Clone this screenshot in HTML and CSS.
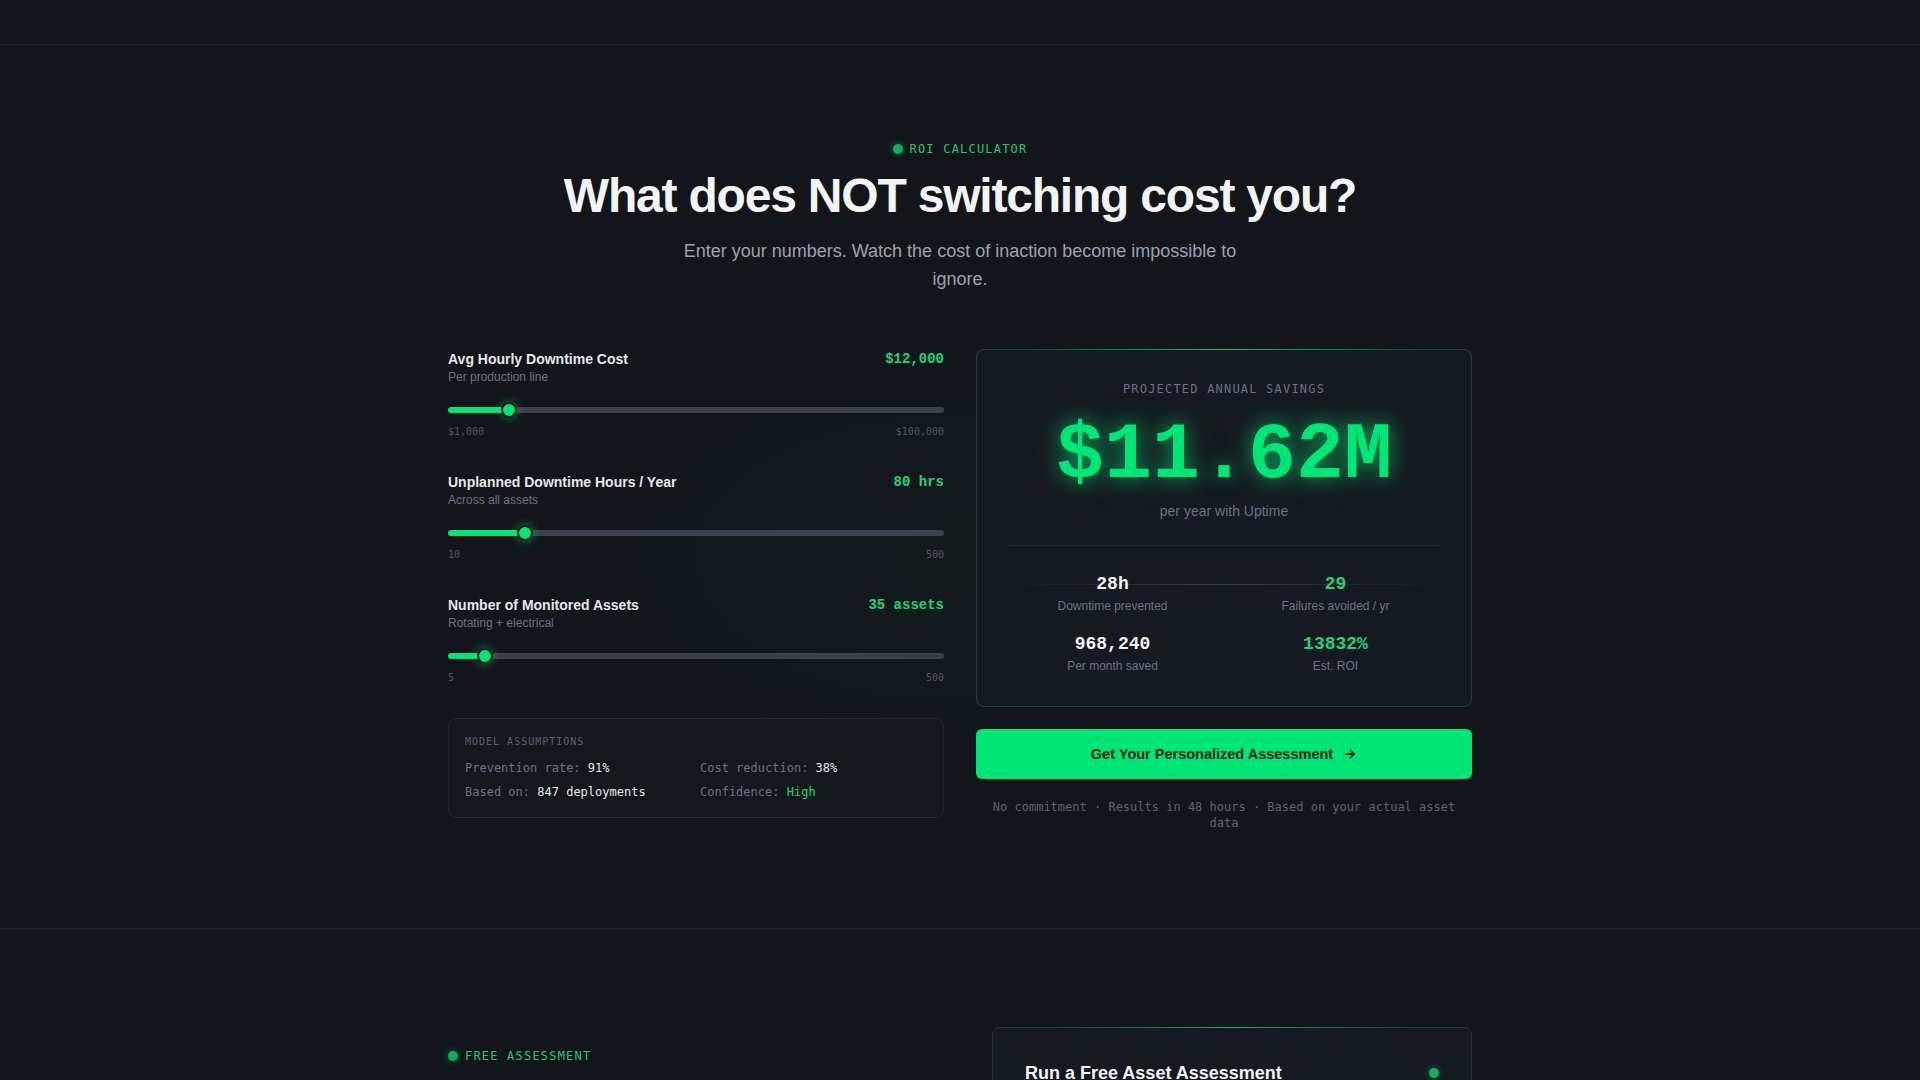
FILE: index.html
```html
<!DOCTYPE html>
<html lang="en">
<head>
<meta charset="utf-8">
<title>ROI Calculator</title>
<link rel="stylesheet" href="styles.css">
</head>
<body>
<header class="topbar"></header>

<section class="roi">
  <div class="roi-inner">
    <div class="eyebrow center"><span class="dot"></span>ROI CALCULATOR</div>
    <h2 class="title">What does NOT switching cost you?</h2>
    <p class="subtitle">Enter your numbers. Watch the cost of inaction become impossible to ignore.</p>

    <div class="calc-grid">
      <div class="inputs">
        <div class="slider-block">
          <div class="slider-head">
            <div>
              <div class="slider-label">Avg Hourly Downtime Cost</div>
              <div class="slider-sub">Per production line</div>
            </div>
            <div class="slider-value">$12,000</div>
          </div>
          <input class="range" type="range" min="1000" max="100000" value="12000" style="--p:11.11%">
          <div class="scale"><span>$1,000</span><span>$100,000</span></div>
        </div>

        <div class="slider-block">
          <div class="slider-head">
            <div>
              <div class="slider-label">Unplanned Downtime Hours / Year</div>
              <div class="slider-sub">Across all assets</div>
            </div>
            <div class="slider-value">80 hrs</div>
          </div>
          <input class="range" type="range" min="10" max="500" value="80" style="--p:14.29%">
          <div class="scale"><span>10</span><span>500</span></div>
        </div>

        <div class="slider-block">
          <div class="slider-head">
            <div>
              <div class="slider-label">Number of Monitored Assets</div>
              <div class="slider-sub">Rotating + electrical</div>
            </div>
            <div class="slider-value">35 assets</div>
          </div>
          <input class="range" type="range" min="5" max="500" value="35" style="--p:6.06%">
          <div class="scale"><span>5</span><span>500</span></div>
        </div>

        <div class="assumptions">
          <div class="assume-title">MODEL ASSUMPTIONS</div>
          <div class="assume-grid">
            <div><span class="k">Prevention rate:</span> <span class="v">91%</span></div>
            <div><span class="k">Cost reduction:</span> <span class="v">38%</span></div>
            <div><span class="k">Based on:</span> <span class="v">847 deployments</span></div>
            <div><span class="k">Confidence:</span> <span class="v green">High</span></div>
          </div>
        </div>
      </div>

      <div class="results">
        <div class="savings-card">
          <div class="savings-label">PROJECTED ANNUAL SAVINGS</div>
          <div class="savings-value">$11.62M</div>
          <div class="savings-sub">per year with Uptime</div>
          <div class="divider"></div>
          <div class="stats">
            <div class="scanline"></div>
            <div class="stat">
              <div class="stat-value">28h</div>
              <div class="stat-label">Downtime prevented</div>
            </div>
            <div class="stat">
              <div class="stat-value green">29</div>
              <div class="stat-label">Failures avoided / yr</div>
            </div>
            <div class="stat">
              <div class="stat-value">968,240</div>
              <div class="stat-label">Per month saved</div>
            </div>
            <div class="stat">
              <div class="stat-value green">13832%</div>
              <div class="stat-label">Est. ROI</div>
            </div>
          </div>
        </div>
        <button class="cta">Get Your Personalized Assessment
          <svg class="arrow" width="14" height="14" viewBox="0 0 24 24" fill="none" stroke="currentColor" stroke-width="3" stroke-linecap="round" stroke-linejoin="round"><path d="M5 12h14"/><path d="M13 6l6 6-6 6"/></svg>
        </button>
        <p class="footnote">No commitment · Results in 48 hours · Based on your actual asset data</p>
      </div>
    </div>
  </div>
</section>

<section class="assess">
  <div class="assess-inner">
    <div class="assess-left">
      <div class="eyebrow"><span class="dot"></span>FREE ASSESSMENT</div>
    </div>
    <div class="assess-card">
      <div class="assess-card-head">
        <h3>Run a Free Asset Assessment</h3>
        <span class="live-dot"></span>
      </div>
    </div>
  </div>
</section>
</body>
</html>
```

FILE: styles.css
```css
* { box-sizing: border-box; }

html, body {
  margin: 0;
  padding: 0;
  background: #12151a;
  color: #e5e7eb;
  font-family: "Liberation Sans", Arial, sans-serif;
}

.topbar {
  height: 45px;
  border-bottom: 1px solid #1d2128;
  background: #12151a;
}

.roi {
  position: relative;
  padding: 96px 0 97px;
  border-bottom: 1px solid #1d2128;
  background:
    radial-gradient(ellipse 700px 380px at 50% 58%, rgba(0, 230, 118, 0.025), rgba(0, 0, 0, 0) 70%),
    #12151a;
}

.roi-inner {
  max-width: 1024px;
  margin: 0 auto;
}

.eyebrow {
  display: flex;
  align-items: center;
  gap: 7px;
  font-family: "DejaVu Sans Mono", monospace;
  font-size: 12px;
  line-height: 16px;
  letter-spacing: 0.1em;
  color: #22c878;
}
.eyebrow.center { justify-content: center; }

.dot {
  width: 10px;
  height: 10px;
  border-radius: 50%;
  background: #0fae5c;
  box-shadow: 0 0 6px rgba(0, 230, 118, 0.5);
}

.title {
  margin: 13px 0 0;
  text-align: center;
  font-size: 48px;
  line-height: 1.1;
  font-weight: 700;
  letter-spacing: -0.025em;
  color: #f3f4f6;
}

.subtitle {
  margin: 14px auto 0;
  max-width: 570px;
  text-align: center;
  font-size: 18px;
  line-height: 28px;
  color: #9ca3af;
}

.calc-grid {
  margin-top: 56px;
  display: grid;
  grid-template-columns: 1fr 1fr;
  gap: 32px;
  align-items: start;
}

/* sliders */
.slider-block { margin-bottom: 33px; }
.slider-block:last-of-type { margin-bottom: 0; }

.slider-head {
  display: flex;
  justify-content: space-between;
  align-items: flex-start;
}

.slider-label {
  font-size: 14px;
  line-height: 20px;
  font-weight: 700;
  color: #e5e7eb;
}

.slider-sub {
  font-size: 12px;
  line-height: 16px;
  color: #6b7280;
}

.slider-value {
  font-family: "Liberation Mono", monospace;
  font-size: 14px;
  line-height: 20px;
  font-weight: 700;
  color: #1fd47a;
}

.range {
  -webkit-appearance: none;
  appearance: none;
  display: block;
  width: 100%;
  height: 16px;
  margin: 17px 0 0;
  padding: 0;
  background: transparent;
  outline: none;
}
.range::-webkit-slider-runnable-track {
  height: 6px;
  border-radius: 3px;
  background: linear-gradient(to right, #00e676 0, #00e676 var(--p), #3a404c var(--p), #3a404c 100%);
}
.range::-webkit-slider-thumb {
  -webkit-appearance: none;
  appearance: none;
  width: 16px;
  height: 16px;
  margin-top: -5px;
  border-radius: 50%;
  background: #00e676;
  border: 2px solid #0f1a14;
  box-shadow: 0 0 8px rgba(0, 230, 118, 0.55);
}
.range::-moz-range-track {
  height: 6px;
  border-radius: 3px;
  background: linear-gradient(to right, #00e676 0, #00e676 var(--p), #3a404c var(--p), #3a404c 100%);
}
.range::-moz-range-thumb {
  width: 14px;
  height: 14px;
  border-radius: 50%;
  background: #00e676;
  border: 2px solid #0f1a14;
  box-shadow: 0 0 8px rgba(0, 230, 118, 0.55);
}

.scale {
  display: flex;
  justify-content: space-between;
  margin-top: 7px;
  font-family: "DejaVu Sans Mono", monospace;
  font-size: 10px;
  line-height: 14px;
  color: #4f5663;
}

/* assumptions */
.assumptions {
  margin-top: 33px;
  padding: 16px;
  border: 1px solid #23272f;
  border-radius: 8px;
  background: #14171c;
}

.assume-title {
  font-family: "DejaVu Sans Mono", monospace;
  font-size: 10px;
  line-height: 14px;
  letter-spacing: 0.1em;
  color: #5b6270;
}

.assume-grid {
  margin-top: 10px;
  display: grid;
  grid-template-columns: 1fr 1fr;
  gap: 6px 8px;
  font-family: "DejaVu Sans Mono", monospace;
  font-size: 12px;
  line-height: 18px;
}
.assume-grid .k { color: #6b7280; }
.assume-grid .v { color: #e5e7eb; }
.green { color: #1fd47a !important; }

/* results */
.savings-card {
  position: relative;
  padding: 31px 32px 32px;
  border: 1px solid rgba(0, 200, 110, 0.28);
  border-radius: 8px;
  background: #151920;
  text-align: center;
}
.savings-card::before {
  content: "";
  position: absolute;
  top: -1px;
  left: 10%;
  right: 10%;
  height: 1px;
  background: linear-gradient(to right, rgba(0, 230, 118, 0), rgba(0, 230, 118, 0.8), rgba(0, 230, 118, 0));
}

.savings-label {
  font-family: "DejaVu Sans Mono", monospace;
  font-size: 12px;
  line-height: 16px;
  letter-spacing: 0.1em;
  color: #6b7280;
}

.savings-value {
  margin-top: 19px;
  font-family: "Liberation Mono", monospace;
  font-size: 80px;
  line-height: 1;
  font-weight: 700;
  color: #00e676;
  text-shadow: 0 0 18px rgba(0, 230, 118, 0.6), 0 0 40px rgba(0, 230, 118, 0.3);
}

.savings-sub {
  margin-top: 5px;
  font-size: 14px;
  line-height: 20px;
  color: #6b7280;
}

.divider {
  margin-top: 24px;
  height: 1px;
  background: #232830;
}

.stats {
  position: relative;
  margin-top: 26px;
  display: grid;
  grid-template-columns: 1fr 1fr;
  gap: 18px 16px;
}

.scanline {
  position: absolute;
  top: 12px;
  left: -10px;
  right: -10px;
  height: 1px;
  background: linear-gradient(to right, rgba(0, 230, 118, 0), rgba(0, 230, 118, 0.28) 50%, rgba(0, 230, 118, 0));
}

.stat { position: relative; }

.stat-value {
  font-family: "Liberation Mono", monospace;
  font-size: 18px;
  line-height: 24px;
  font-weight: 700;
  color: #f3f4f6;
}

.stat-label {
  margin-top: 2px;
  font-size: 12px;
  line-height: 16px;
  color: #6b7280;
}

.cta {
  margin-top: 22px;
  width: 100%;
  height: 50px;
  border: 0;
  border-radius: 6px;
  background: #00e676;
  color: #0b2416;
  font-family: "Liberation Sans", Arial, sans-serif;
  font-size: 14.5px;
  font-weight: 700;
  display: flex;
  align-items: center;
  justify-content: center;
  gap: 10px;
  cursor: pointer;
}

.footnote {
  margin: 20px 0 0;
  text-align: center;
  font-family: "DejaVu Sans Mono", monospace;
  font-size: 12px;
  line-height: 16px;
  color: #5b6270;
}

/* second section */
.assess {
  padding: 98px 0 80px;
}

.assess-inner {
  max-width: 1024px;
  margin: 0 auto;
  display: grid;
  grid-template-columns: 1fr 480px;
  gap: 48px;
}

.assess-left { padding-top: 21px; }

.assess-card {
  position: relative;
  min-height: 300px;
  padding: 33px 32px 32px;
  border: 1px solid rgba(0, 200, 110, 0.22);
  border-radius: 8px;
  background: #151920;
}
.assess-card::before {
  content: "";
  position: absolute;
  top: -1px;
  left: 10%;
  right: 10%;
  height: 1px;
  background: linear-gradient(to right, rgba(0, 230, 118, 0), rgba(0, 230, 118, 0.7), rgba(0, 230, 118, 0));
}

.assess-card-head {
  display: flex;
  justify-content: space-between;
  align-items: center;
}

.assess-card-head h3 {
  margin: 0;
  font-size: 18px;
  line-height: 24px;
  font-weight: 700;
  color: #f3f4f6;
}

.live-dot {
  width: 10px;
  height: 10px;
  border-radius: 50%;
  background: #0fae5c;
  box-shadow: 0 0 6px rgba(0, 230, 118, 0.5);
}
```
